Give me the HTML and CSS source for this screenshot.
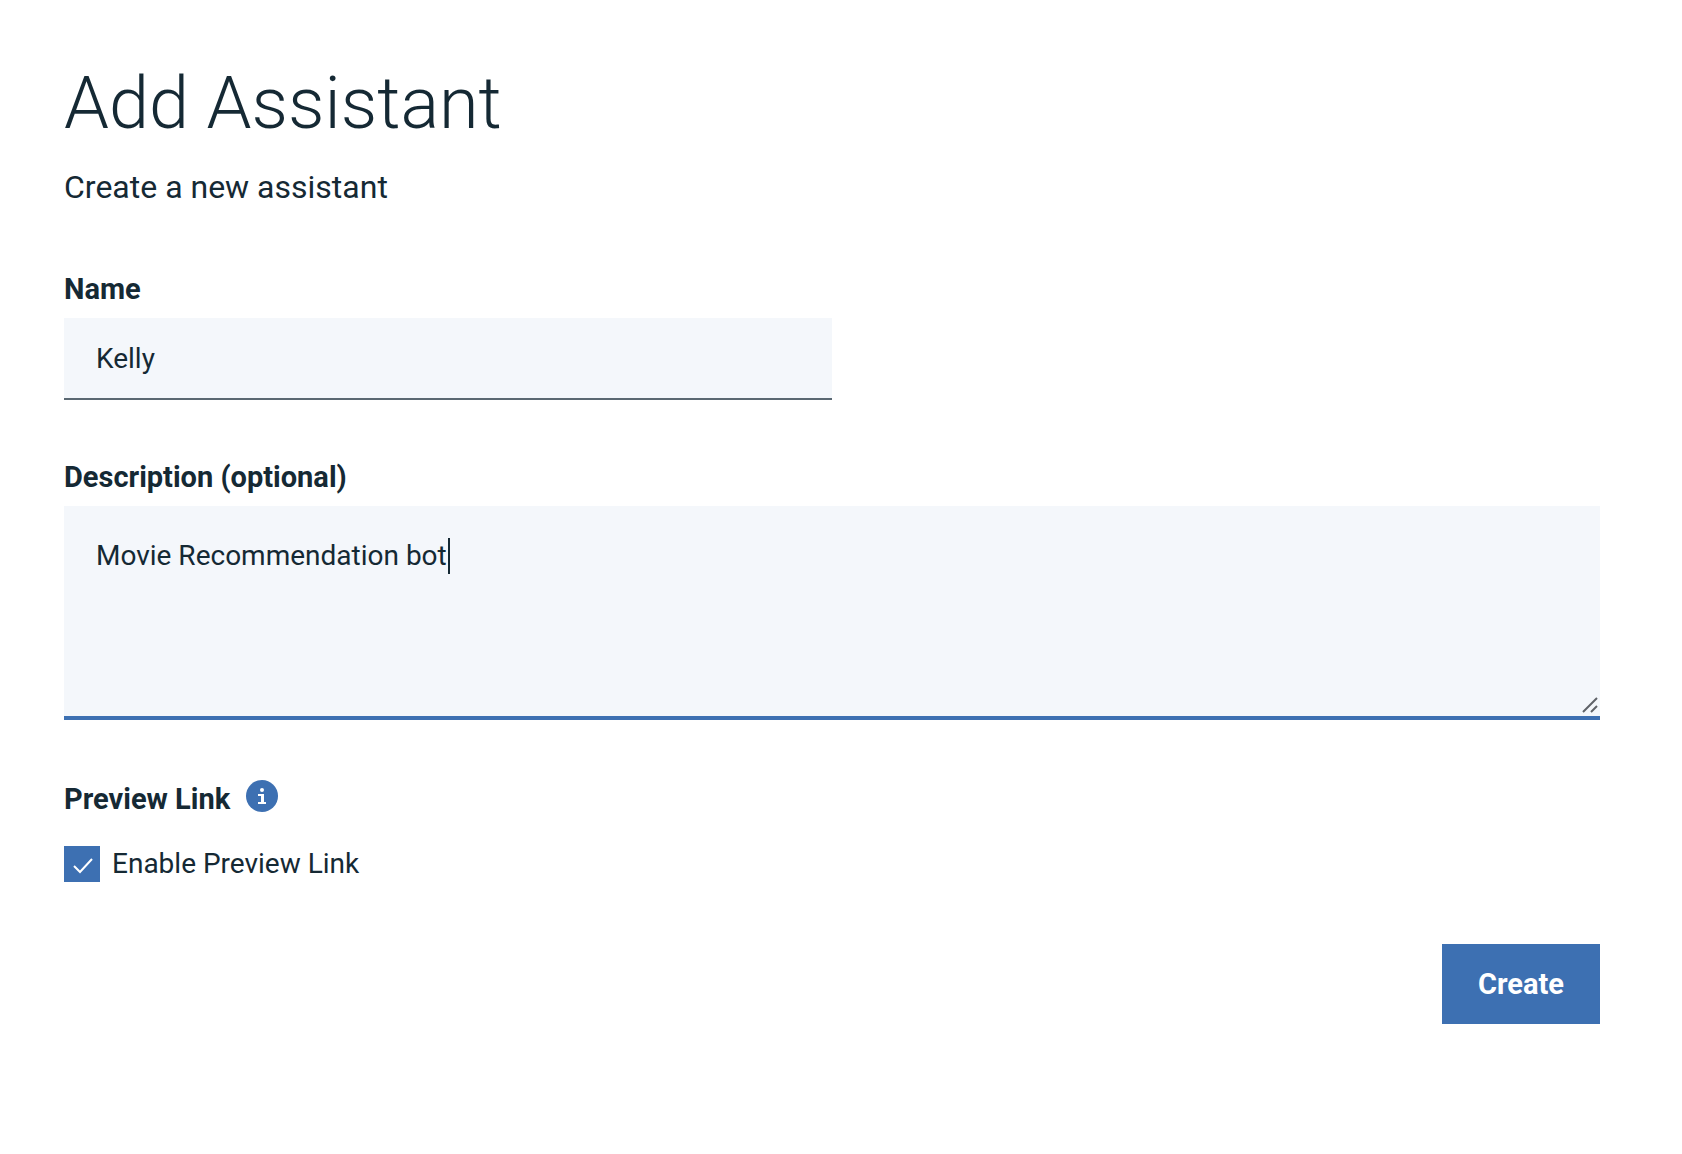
FILE: index.html
```html
<!DOCTYPE html>
<html lang="en">
<head>
<meta charset="utf-8">
<meta name="viewport" content="width=device-width, initial-scale=1">
<title>Add Assistant</title>
<link rel="stylesheet" href="styles.css">
</head>
<body>
<main class="page">
  <header class="intro">
    <h1 class="title">Add Assistant</h1>
    <p class="subtitle">Create a new assistant</p>
  </header>
  <form class="form">
    <div class="field">
      <label class="label" for="name">Name</label>
      <input class="input" id="name" type="text" value="Kelly">
    </div>
    <div class="field">
      <label class="label" for="description">Description (optional)</label>
      <div class="area">
        <textarea class="textarea" id="description">Movie Recommendation bot</textarea>
        <span class="caret" aria-hidden="true"></span>
        <svg class="grip" viewBox="0 0 16 16" aria-hidden="true"><path d="M1 15 15 1M9 15l6-6" fill="none" stroke="#5f6368" stroke-width="2"/></svg>
      </div>
    </div>
    <fieldset class="preview">
      <legend class="legend">
        <span class="label">Preview Link</span>
        <svg class="info" viewBox="0 0 32 32" aria-hidden="true"><circle cx="16" cy="16" r="16" fill="#3d70b2"/><circle cx="16" cy="10" r="2" fill="#fff"/><path d="M12 14h6v8h2v2h-8v-2h3v-6h-3z" fill="#fff"/></svg>
      </legend>
      <div class="option">
        <input class="check" id="enable" type="checkbox" checked>
        <label class="option-label" for="enable">Enable Preview Link</label>
        <svg class="tick" viewBox="0 0 36 36" aria-hidden="true"><path d="M10 20l6 6L28 13" fill="none" stroke="#fff" stroke-width="2"/></svg>
      </div>
    </fieldset>
    <div class="actions"><button class="button" type="button">Create</button></div>
  </form>
</main>
</body>
</html>
```
FILE: styles.css
```css
* { box-sizing: border-box; }
body {
  margin: 0;
  background: #fff;
  color: #152934;
  font: 400 28px/36px Roboto, sans-serif;
}
.page { padding: 64px 82px 64px 64px; }
.title { margin: 0; font-size: 72px; line-height: 80px; font-weight: 300; }
.subtitle { margin: 20px 0 0; font-size: 32px; line-height: 46px; }
.form { margin-top: 60px; display: flex; flex-direction: column; gap: 58px; }
.field { display: flex; flex-direction: column; gap: 10px; }
.label { font-size: 29px; line-height: 38px; font-weight: 700; }
.input, .textarea {
  display: block;
  margin: 0;
  border: 0;
  border-radius: 0;
  outline: 0;
  background: #f4f7fb;
  color: inherit;
  font: inherit;
}
.input { width: 50%; height: 82px; padding: 0 32px; border-bottom: 2px solid #5a6872; }
.area { position: relative; }
.textarea {
  width: 100%;
  height: 214px;
  padding: 32px;
  border-bottom: 4px solid #3d70b2;
  resize: none;
}
.caret { position: absolute; left: 384px; top: 32px; width: 2px; height: 36px; background: #152934; }
.grip { position: absolute; right: 2px; bottom: 7px; width: 16px; height: 16px; }
.preview { margin: 0; padding: 0; border: 0; min-width: 0; }
.legend { display: flex; align-items: flex-start; gap: 16px; padding: 2px 0 0; }
.info { width: 32px; height: 32px; }
.option { position: relative; display: flex; align-items: center; gap: 12px; margin-top: 28px; }
.check { appearance: none; width: 36px; height: 36px; margin: 0; background: #3d70b2; }
.tick { position: absolute; left: 0; top: 0; display: none; width: 36px; height: 36px; pointer-events: none; }
.check:checked ~ .tick { display: block; }
.actions { display: flex; justify-content: flex-end; margin-top: 4px; }
.button {
  height: 80px;
  padding: 0 36px;
  border: 0;
  background: #3d70b2;
  color: #fff;
  font: inherit;
  font-size: 29px;
  font-weight: 700;
}
```
